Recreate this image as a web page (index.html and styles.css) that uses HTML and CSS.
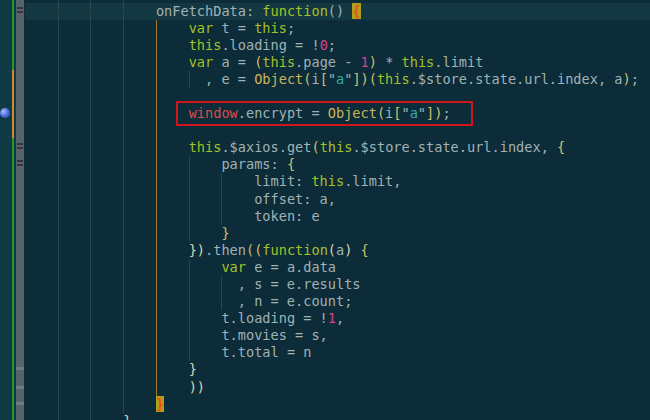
FILE: index.html
```html
<!DOCTYPE html>
<html lang="en">
<head>
    <meta charset="UTF-8">
    <title>onFetchData</title>
    <link rel="stylesheet" href="styles.css">
</head>
<body>
    <div class="gutter">
        <div class="strip"><span class="bp"></span></div>
        <div class="changes">
            <div class="chg add-top"></div>
            <div class="chg mod"></div>
            <div class="chg add-rest"></div>
        </div>
        <div class="gap"></div>
        <div class="ruler">
            <div class="tick t1"></div>
            <div class="tick t2"></div>
            <div class="tick t3"></div>
            <div class="hint h1"></div>
            <div class="hint h2"></div>
            <div class="hint h3"></div>
        </div>
    </div>

    <div class="editor">
        <div class="code">
            <div class="blk">
                <div class="blk">
                    <div class="blk">
                        <div class="line"><span class="q">}</span>,</div>
                        <div class="line">onFetchData: <span class="kw">function</span>() <span class="match">{</span></div>
                        <div class="blk scope">
                            <div class="line"><span class="kw">var</span> t = <span class="kw">this</span>;</div>
                            <div class="line"><span class="kw">this</span>.loading = !<span class="n">0</span>;</div>
                            <div class="line"><span class="kw">var</span> a = <span class="p">(</span><span class="kw">this</span>.page - <span class="n">1</span><span class="p">)</span> * <span class="kw">this</span>.limit</div>
                            <div class="blk cont">
                                <div class="line">, e = <span class="obj">Object</span><span class="p">(</span>i<span class="p">[</span>"<span class="s">a</span>"<span class="p">])(</span><span class="kw">this</span>.$store.state.url.index, a<span class="p">)</span>;</div>
                            </div>
                            <div class="line"></div>
                            <div class="line"><span class="mark"><span class="g">window</span>.encrypt = <span class="obj">Object</span><span class="p">(</span>i<span class="p">[</span>"<span class="s">a</span>"<span class="p">])</span>;</span></div>
                            <div class="line"></div>
                            <div class="line"><span class="kw">this</span>.$axios.get<span class="p">(</span><span class="kw">this</span>.$store.state.url.index, <span class="p">{</span></div>
                            <div class="blk">
                                <div class="line">params: <span class="p">{</span></div>
                                <div class="blk">
                                    <div class="line">limit: <span class="kw">this</span>.limit,</div>
                                    <div class="line">offset: a,</div>
                                    <div class="line">token: e</div>
                                </div>
                                <div class="line"><span class="p">}</span></div>
                            </div>
                            <div class="line"><span class="q">})</span>.then<span class="p">((</span><span class="kw">function</span><span class="q">(</span>a<span class="q">)</span> <span class="p">{</span></div>
                            <div class="blk">
                                <div class="line"><span class="kw">var</span> e = a.data</div>
                                <div class="blk cont">
                                    <div class="line">, s = e.results</div>
                                    <div class="line">, n = e.count;</div>
                                </div>
                                <div class="line">t.loading = !<span class="n">1</span>,</div>
                                <div class="line">t.movies = s,</div>
                                <div class="line">t.total = n</div>
                            </div>
                            <div class="line"><span class="q">}</span></div>
                            <div class="line"><span class="q">))</span></div>
                        </div>
                        <div class="line"><span class="match">}</span></div>
                    </div>
                    <div class="line"><span class="q">}</span></div>
                </div>
            </div>
        </div>
    </div>
</body>
</html>
```

FILE: styles.css
```css
body {
    margin: 0;
    display: flex;
    height: 420px;
    overflow: hidden;
    background-color: #0b2c38;
    font-family: "DejaVu Sans Mono", monospace;
    font-size: 13.6px;
    color: #a0b2b5;
}

/* left gutter */
.gutter {
    width: 25px;
    flex-shrink: 0;
    display: flex;
}

.strip {
    width: 12px;
    background-color: #0f3a44;
    display: flex;
    flex-direction: column;
}

.bp {
    width: 10px;
    height: 10px;
    margin-top: 108px;
    border-radius: 50%;
    background: radial-gradient(circle at 35% 35%, #a9bcff, #4466d8 55%, #2a46a6);
}

.changes {
    width: 2px;
    display: flex;
    flex-direction: column;
}

.chg { background-color: #1f9c28; }
.add-top { height: 70px; }
.mod { height: 68px; background-color: #d08a2a; }
.add-rest { flex: 1; }

.gap {
    width: 2px;
    background-color: #0f3a44;
}

.ruler {
    width: 8px;
    margin-right: 1px;
    background-color: #56646a;
    display: flex;
    flex-direction: column;
    align-items: center;
}

.tick {
    width: 6px;
    height: 8px;
    background: repeating-linear-gradient(#2f3842 0 2px, #6b5d68 2px 4px);
}
.t1 { margin-top: 7px; }
.t2 { margin-top: 128px; }
.t3 { margin-top: 9px; }

.hint {
    width: 8px;
    height: 3px;
    background-color: #6e7b80;
}
.h1 { margin-top: 199px; }
.h2 { margin-top: 16px; }
.h3 { margin-top: 13px; }

/* code area */
.editor {
    flex: 1;
    overflow: hidden;
}

.code {
    margin-top: -14.6px;
    padding-left: 4ch;
    /* current line highlight */
    background: linear-gradient(#133841, #133841) 0 17.1px / 100% 17.1px no-repeat;
}

.blk {
    border-left: 1px solid #27474f;
    padding-left: calc(4ch - 1px);
}

.scope { border-left-color: #a8772b; }
.cont { padding-left: calc(2ch - 1px); }

.line {
    height: 17.1px;
    line-height: 17.1px;
    white-space: pre;
}

.kw { color: #a3c128; }
.obj { color: #cdb45a; }
.p { color: #d2bf70; }
.q { color: #ddd4b0; }
.s { color: #36abab; }
.n { color: #d8428c; }
.g { color: #de4a4c; }

.match {
    background-color: #ae9f1c;
    color: #e8501a;
    font-weight: bold;
}

.mark {
    border: 2px solid #d0161b;
    padding: 2px 20px 3px 11px;
    margin-left: -13px;
}
```
